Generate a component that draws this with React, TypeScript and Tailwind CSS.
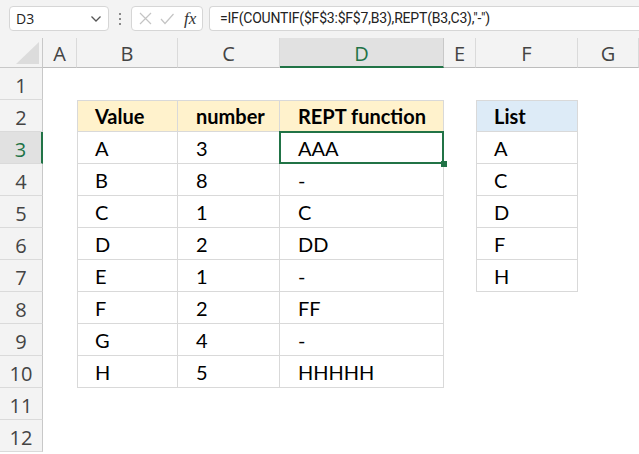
import React from 'react'

const cols = ['A', 'B', 'C', 'D', 'E', 'F', 'G']

const data: Record<number, string[]> = {
  2: ['Value', 'number', 'REPT function'],
  3: ['A', '3', 'AAA'],
  4: ['B', '8', '-'],
  5: ['C', '1', 'C'],
  6: ['D', '2', 'DD'],
  7: ['E', '1', '-'],
  8: ['F', '2', 'FF'],
  9: ['G', '4', '-'],
  10: ['H', '5', 'HHHHH'],
}

const list: Record<number, string> = { 2: 'List', 3: 'A', 4: 'C', 5: 'D', 6: 'F', 7: 'H' }

const cellFont = { fontFamily: 'Lato, "Open Sans", sans-serif' }
const uiFont = { fontFamily: '"Open Sans", "Noto Sans", sans-serif' }

function Cell({ row, col }: { row: number; col: string }) {
  let text = ''
  let cls = 'relative flex items-end pb-[3px] h-[32px] leading-[24px] text-[20px] text-black whitespace-nowrap'
  const inTable = row >= 2 && row <= 10 && ['B', 'C', 'D'].includes(col)
  const inList = row >= 2 && row <= 7 && col === 'F'

  if (inTable) {
    text = data[row][['B', 'C', 'D'].indexOf(col)]
    cls += ' border-r border-b border-[#d9d9d9]'
    cls += col === 'B' ? ' border-l pl-[17px]' : ' pl-[18px]'
    if (row === 2) cls += ' border-t bg-[#fff2cc] font-bold'
  } else if (inList) {
    text = list[row]
    cls += ' border-r border-b border-l border-[#d9d9d9] pl-[17px]'
    if (row === 2) cls += ' border-t bg-[#ddebf7] font-bold'
  }

  const selected = row === 3 && col === 'D'
  if (selected) cls += ' z-10'

  return (
    <div className={cls} style={cellFont}>
      {text}
      {selected && (
        <>
          <div className="absolute -left-[1px] -top-[1px] -right-[1px] -bottom-[1px] border-2 border-[#217346]" />
          <div className="absolute -right-[4px] -bottom-[4px] w-[6px] h-[6px] bg-[#217346]" />
        </>
      )}
    </div>
  )
}

export default function App() {
  const rows = Array.from({ length: 12 }, (_, i) => i + 1)

  return (
    <div className="w-[639px] h-[454px] overflow-hidden bg-white" style={uiFont}>
      {/* formula bar */}
      <div className="h-[38px] bg-[#f3f3f3] flex items-start pt-[6px]">
        <div className="ml-[9px] w-[100px] h-[25px] rounded-[4px] border border-[#d6d6d6] bg-white flex items-center justify-between pl-[6px] pr-[6px] text-[14px] text-[#222]">
          <span>D3</span>
          <svg width="12" height="8" viewBox="0 0 12 8" fill="none">
            <path d="M1.5 1.5 L6 6 L10.5 1.5" stroke="#555" strokeWidth="1.3" />
          </svg>
        </div>
        <div className="w-[22px] h-[25px] flex flex-col items-center justify-center gap-[3px]">
          <div className="w-[2px] h-[2px] bg-[#8a8a8a]" />
          <div className="w-[2px] h-[2px] bg-[#8a8a8a]" />
          <div className="w-[2px] h-[2px] bg-[#8a8a8a]" />
        </div>
        <div className="w-[72px] h-[25px] rounded-[4px] border border-[#d6d6d6] bg-white flex items-center pl-[7px] gap-[8px]">
          <svg width="13" height="13" viewBox="0 0 13 13">
            <path d="M1 1 L12 12 M12 1 L1 12" stroke="#c4c4c4" strokeWidth="1.2" />
          </svg>
          <svg width="14" height="12" viewBox="0 0 14 12">
            <path d="M1 6 L5 10.5 L13.5 1" stroke="#c4c4c4" strokeWidth="1.2" fill="none" />
          </svg>
          <span className="text-[17px] italic text-[#333] leading-none ml-[2px]" style={{ fontFamily: '"Liberation Serif", serif' }}>
            fx
          </span>
        </div>
        <div
          className="ml-[6px] flex-1 h-[25px] rounded-l-[4px] border border-r-0 border-[#d6d6d6] bg-white flex items-center pl-[10px] text-[14px] text-[#222] whitespace-nowrap tracking-[-0.2px]"
          style={{ fontFamily: 'Roboto, sans-serif' }}
        >
          =IF(COUNTIF($F$3:$F$7,B3),REPT(B3,C3),"-")
        </div>
      </div>

      {/* sheet */}
      <div className="grid grid-cols-[43px_34px_101px_102px_164px_32px_102px_1fr]">
        <div className="h-[30px] bg-[#f3f3f3] border-b border-r border-[#c8c8c8] flex items-end justify-end pr-[3px] pb-[3px]">
          <svg width="23" height="22" viewBox="0 0 23 22">
            <path d="M23 0 L23 22 L0 22 Z" fill="#dcdcdc" />
          </svg>
        </div>
        {cols.map((c) =>
          c === 'D' ? (
            <div
              key={c}
              className="h-[30px] bg-[#e1e1e1] border-b-2 border-b-[#217346] border-r border-r-[#c8c8c8] flex items-center justify-center pt-[3px] text-[20px] text-[#217346]"
            >
              {c}
            </div>
          ) : (
            <div
              key={c}
              className="h-[30px] bg-[#f3f3f3] border-b border-b-[#bdbdbd] border-r border-r-[#dadada] flex items-center justify-center pt-[3px] text-[20px] text-[#444]"
            >
              {c}
            </div>
          )
        )}

        {rows.map((r) => (
          <React.Fragment key={r}>
            {r === 3 ? (
              <div className="h-[32px] bg-[#e1e1e1] border-b border-b-[#dadada] border-r-2 border-r-[#217346] flex items-center justify-center pt-[4px] text-[20px] text-[#217346]">
                {r}
              </div>
            ) : (
              <div className="h-[32px] bg-[#f3f3f3] border-b border-b-[#dadada] border-r border-r-[#c8c8c8] flex items-center justify-center pt-[4px] text-[20px] text-[#444]">
                {r}
              </div>
            )}
            {cols.map((c) => (
              <Cell key={c} row={r} col={c} />
            ))}
          </React.Fragment>
        ))}
      </div>
    </div>
  )
}
